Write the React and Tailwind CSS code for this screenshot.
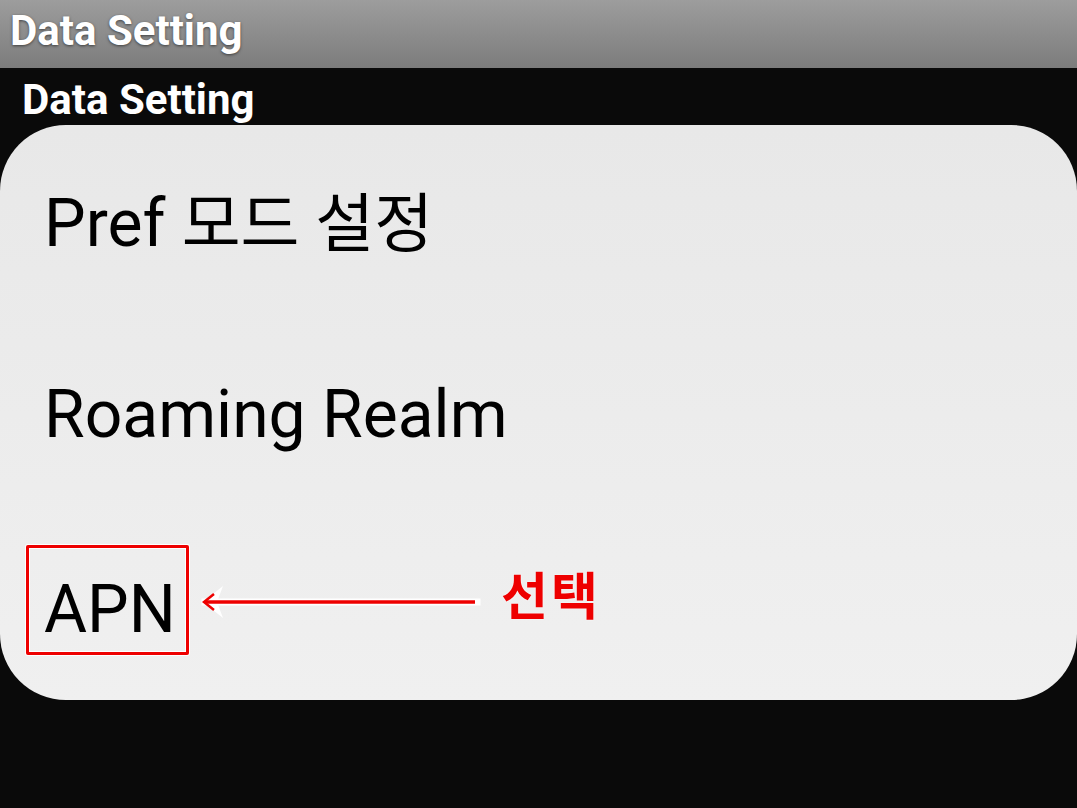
const FONT = "font-['Roboto','Noto_Sans_CJK_KR',sans-serif]"

function Arrow() {
  return (
    <svg width="290" height="40" viewBox="0 0 290 40" className="shrink-0">
      {/* white halo */}
      <line x1="6" y1="20" x2="278" y2="20" stroke="#fff" strokeWidth="7" strokeLinecap="square" />
      <path d="M24 4 L4 20 L24 36 L18 20 Z" fill="#fff" />
      {/* red stroke */}
      <line x1="6" y1="20" x2="276" y2="20" stroke="#ee0000" strokeWidth="3.5" />
      <path d="M15 12 L5 20 L15 28" fill="none" stroke="#ee0000" strokeWidth="2.5" strokeLinejoin="miter" />
    </svg>
  )
}

export default function App() {
  return (
    <div className={`w-[1077px] h-[808px] bg-[#0a0a0a] overflow-hidden ${FONT}`}>
      {/* Title bar */}
      <div className="h-[68px] bg-gradient-to-b from-[#9d9d9d] to-[#7c7c7c] flex items-center pl-[10px]">
        <span className="text-white font-bold text-[42px] leading-none [text-shadow:0_1px_3px_rgba(0,0,0,0.55)] -mt-[6px]">
          Data Setting
        </span>
      </div>

      {/* Section title */}
      <div className="h-[57px] flex items-center pl-[22px]">
        <span className="text-white font-bold text-[42px] leading-none mt-[6px]">Data Setting</span>
      </div>

      {/* Card */}
      <div className="h-[575px] rounded-[66px] bg-gradient-to-b from-[#e8e8e8] to-[#f0f0f0] flex flex-col">
        <div className="h-[192px] flex items-center pl-[44px] pt-[6px]">
          <span className="text-black text-[66px] leading-none">
            Pref <span className="text-[64px]">모드 설정</span>
          </span>
        </div>
        <div className="h-[192px] flex items-center pl-[44px] pt-[4px]">
          <span className="text-black text-[66px] leading-none">Roaming Realm</span>
        </div>
        <div className="h-[191px] flex items-center pl-[26px]">
          <div className="w-[163px] h-[110px] border-[3px] border-[#ee0000] rounded-[2px] shadow-[0_0_0_1px_#fff,inset_0_0_0_1px_#fff] flex items-center pl-[15px] pt-[20px] -mt-[10px]">
            <span className="text-black text-[66px] leading-none">APN</span>
          </div>
          <div className="ml-[10px] mt-[-6px]">
            <Arrow />
          </div>
          <span className="ml-[12px] mt-[-22px] text-[#ee0000] font-bold text-[51px] leading-none tracking-[3px] font-['Noto_Sans_CJK_KR',sans-serif] [text-shadow:0_0_2px_#fff]">
            선택
          </span>
        </div>
      </div>
    </div>
  )
}
